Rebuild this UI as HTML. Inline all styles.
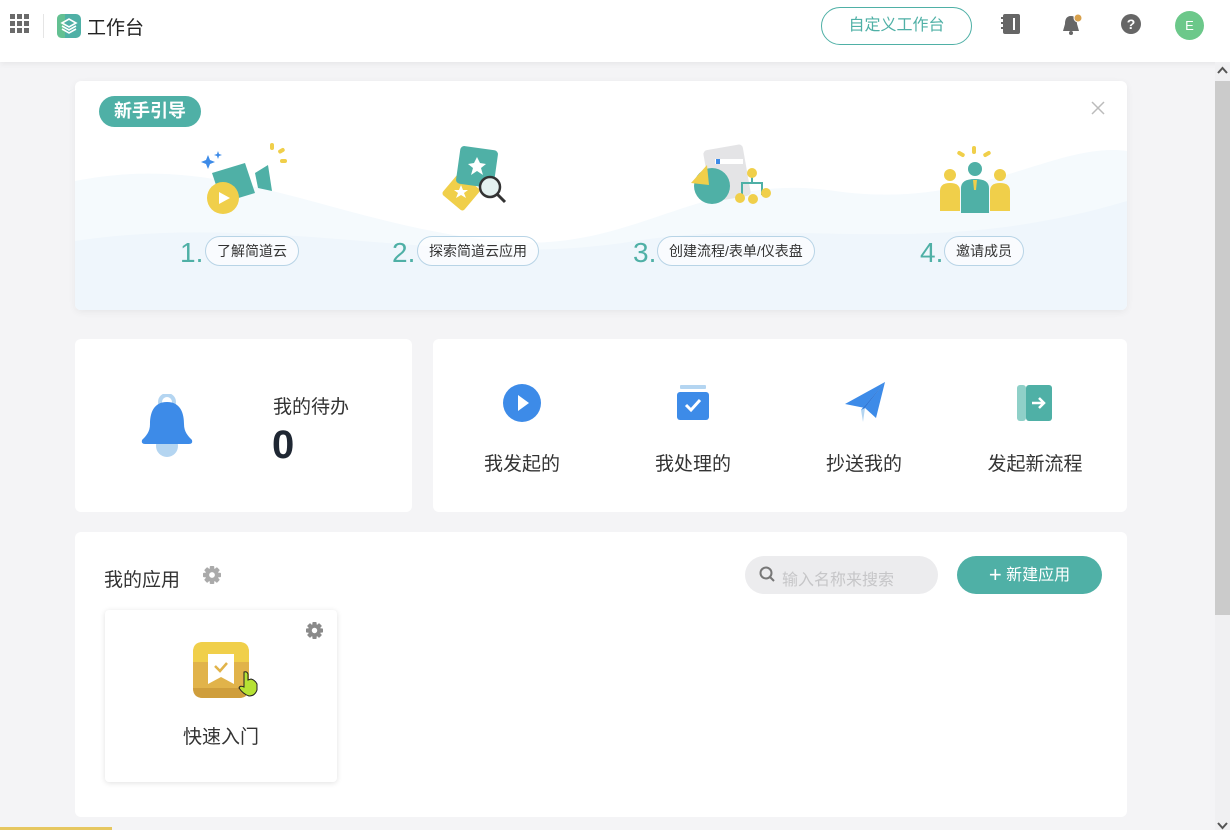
<!DOCTYPE html>
<html><head><meta charset="utf-8"><style>
*{margin:0;padding:0;box-sizing:border-box}
body{width:1230px;height:830px;overflow:hidden;background:#f4f4f6;font-family:"Liberation Sans","Noto Sans CJK SC",sans-serif;color:#333;position:relative}
.top{position:absolute;left:0;top:0;width:1230px;height:62px;background:#fff;box-shadow:0 2px 6px rgba(0,0,0,.06)}
.card{position:absolute;background:#fff;border-radius:6px}
.abs{position:absolute}
.pill{position:absolute;border:1px solid #b8d4e6;border-radius:15px;height:30px;line-height:28px;font-size:14px;color:#333;padding:0 11px;background:rgba(255,255,255,.6)}
.num{position:absolute;font-size:28px;color:#4fb0a6;line-height:30px}
.lbl{position:absolute;font-size:19px;color:#333;text-align:center;width:140px}
</style></head><body>
<svg width="0" height="0" style="position:absolute"><defs>
<g id="gear"><g fill="currentColor"><rect x="7.5" y="0" width="5" height="20" rx="1"/><rect x="7.5" y="0" width="5" height="20" rx="1" transform="rotate(45 10 10)"/><rect x="7.5" y="0" width="5" height="20" rx="1" transform="rotate(90 10 10)"/><rect x="7.5" y="0" width="5" height="20" rx="1" transform="rotate(135 10 10)"/><circle cx="10" cy="10" r="7.5"/></g><circle cx="10" cy="10" r="3.2" fill="#fff"/></g>
</defs></svg>
<div class="top">
  <svg class="abs" style="left:10px;top:14px" width="20" height="20"><g fill="#6b6b6b"><rect x="0" y="0" width="5" height="5"/><rect x="7" y="0" width="5" height="5"/><rect x="14" y="0" width="5" height="5"/><rect x="0" y="7" width="5" height="5"/><rect x="7" y="7" width="5" height="5"/><rect x="14" y="7" width="5" height="5"/><rect x="0" y="14" width="5" height="5"/><rect x="7" y="14" width="5" height="5"/><rect x="14" y="14" width="5" height="5"/></g></svg>
  <div class="abs" style="left:43px;top:14px;width:1px;height:24px;background:#e5e5e5"></div>
  <svg class="abs" style="left:57px;top:14px" width="24" height="24"><rect width="24" height="24" rx="5" fill="#4fb0a6"/><path d="M0 5 Q0 0 5 0 L8 0 L8 24 L5 24 Q0 24 0 19Z" fill="#6cc88a" opacity=".7"/><path d="M5 9 L12 5 L19 9 L12 13Z M5 12 L12 16 L19 12 M5 15 L12 19 L19 15" fill="none" stroke="#fff" stroke-width="1.6"/></svg>
  <div class="abs" style="left:87px;top:13px;font-size:19px;color:#222">工作台</div>
  <div class="abs" style="left:821px;top:7px;width:151px;height:38px;border:1px solid #4fb0a6;border-radius:19px;text-align:center;line-height:36px;font-size:16px;color:#4fb0a6">自定义工作台</div>
  <svg class="abs" style="left:1000px;top:13px" width="22" height="22"><rect x="3" y="1" width="17" height="20" rx="2" fill="#666"/><rect x="13" y="5" width="2" height="12" fill="#fff"/><g fill="#666"><rect x="1" y="4" width="3" height="2"/><rect x="1" y="9" width="3" height="2"/><rect x="1" y="14" width="3" height="2"/></g></svg>
  <svg class="abs" style="left:1060px;top:12px" width="24" height="24"><path d="M11 4 C6 4 5 8 5 12 L3 19 L19 19 L17 12 C17 8 16 4 11 4Z" fill="#666"/><circle cx="11" cy="21" r="2" fill="#666"/><circle cx="18" cy="6" r="4" fill="#d8a14c" stroke="#fff" stroke-width="1"/></svg>
  <svg class="abs" style="left:1120px;top:13px" width="22" height="22"><circle cx="11" cy="11" r="10" fill="#666"/><text x="11" y="16" text-anchor="middle" font-size="14" font-weight="bold" fill="#fff" font-family="Liberation Sans">?</text></svg>
  <div class="abs" style="left:1175px;top:11px;width:29px;height:29px;border-radius:50%;background:#6cc88a;color:#fff;text-align:center;line-height:29px;font-size:13px">E</div>
</div>
<div class="abs" style="left:1215px;top:62px;width:15px;height:768px;background:#f0f0f2"></div>
<div class="abs" style="left:1215px;top:81px;width:15px;height:534px;background:#cbcbcb"></div>
<svg class="abs" style="left:1217px;top:66px" width="11" height="8"><path d="M1 7 L5.5 2 L10 7" stroke="#555" stroke-width="2" fill="none"/></svg>
<svg class="abs" style="left:1217px;top:822px" width="11" height="8"><path d="M1 1 L5.5 6 L10 1" stroke="#555" stroke-width="2" fill="none"/></svg>

<div class="card" style="left:75px;top:81px;width:1052px;height:229px;overflow:hidden;box-shadow:0 2px 8px rgba(0,0,0,.06)">
  <svg class="abs" style="left:0;top:0" width="1052" height="229"><path d="M0 100 C150 70 250 140 420 160 C560 175 620 90 760 110 C900 130 980 60 1052 70 L1052 229 L0 229Z" fill="#f5fafd"/><path d="M0 160 C200 130 380 190 560 160 C720 135 850 180 1052 120 L1052 229 L0 229Z" fill="#eff6fc"/></svg>
  <div class="abs" style="left:24px;top:15px;width:102px;height:31px;border-radius:16px;background:#4fb0a6;color:#fff;font-weight:bold;font-size:18px;text-align:center;line-height:31px">新手引导</div>
  <svg class="abs" style="left:1016px;top:20px" width="14" height="14"><path d="M1 1 L13 13 M13 1 L1 13" stroke="#bbb" stroke-width="1.5"/></svg>
  <svg class="abs" style="left:125px;top:62px" width="90" height="75"><path d="M8 12 l2 5 5 2 -5 2 -2 5 -2 -5 -5 -2 5 -2z M18 8 l1 3 3 1 -3 1 -1 3 -1 -3 -3 -1 3 -1z" fill="#3d8be8"/><path d="M12 30 L45 20 L55 50 L22 60Z" fill="#4fb0a6"/><path d="M55 30 L68 22 L72 48 L58 45Z" fill="#4fb0a6"/><circle cx="23" cy="55" r="16" fill="#f0cf4a"/><path d="M19 49 L30 55 L19 61Z" fill="#fff"/><g fill="#f0cf4a"><rect x="70" y="0" width="4" height="7" rx="2"/><rect x="78" y="6" width="7" height="4" rx="2" transform="rotate(-30 81 8)"/><rect x="80" y="16" width="7" height="4" rx="2"/></g></svg>
  <div class="num" style="left:105px;top:157px">1.</div><div class="pill" style="left:130px;top:155px">了解简道云</div>
  <svg class="abs" style="left:355px;top:62px" width="80" height="75"><rect x="17" y="35" width="28" height="28" rx="3" fill="#f0cf4a" transform="rotate(40 31 49)"/><path d="M31 42 l2 5 5 0 -4 3 2 5 -5 -3 -5 3 2 -5 -4 -3 5 0z" fill="#fff"/><rect x="28" y="5" width="38" height="38" rx="4" fill="#4fb0a6" transform="rotate(8 47 24)"/><path d="M47 14 l3 6 6 1 -5 4 2 7 -6 -4 -6 4 2 -7 -5 -4 6 -1z" fill="#fff"/><circle cx="60" cy="44" r="10" fill="#e4f1f0" stroke="#333" stroke-width="2.5"/><line x1="67" y1="51" x2="75" y2="59" stroke="#333" stroke-width="3"/></svg>
  <div class="num" style="left:317px;top:157px">2.</div><div class="pill" style="left:342px;top:155px">探索简道云应用</div>
  <svg class="abs" style="left:610px;top:62px" width="95" height="75"><rect x="22" y="4" width="40" height="52" rx="4" fill="#e4e4e6" transform="rotate(-10 42 30)"/><rect x="30" y="16" width="28" height="5" fill="#fff"/><rect x="31" y="16" width="4" height="5" fill="#3d8be8"/><circle cx="27" cy="43" r="18" fill="#4fb0a6"/><path d="M6 40 L22 22 L24 42Z" fill="#f0cf4a"/><path d="M57 52 L57 40 L77 40 L77 52 M67 32 L67 40" stroke="#4fb0a6" stroke-width="2" fill="none"/><g fill="#f0cf4a"><circle cx="67" cy="30" r="5"/><circle cx="55" cy="55" r="5"/><circle cx="68" cy="56" r="5"/><circle cx="81" cy="50" r="5"/></g></svg>
  <div class="num" style="left:558px;top:157px">3.</div><div class="pill" style="left:582px;top:155px">创建流程/表单/仪表盘</div>
  <svg class="abs" style="left:860px;top:62px" width="80" height="75"><g fill="#f0cf4a"><rect x="37" y="3" width="4" height="8" rx="2"/><rect x="22" y="9" width="8" height="4" rx="2" transform="rotate(30 26 11)"/><rect x="48" y="9" width="8" height="4" rx="2" transform="rotate(-30 52 11)"/><circle cx="15" cy="32" r="6"/><path d="M5 48 Q5 40 15 40 Q25 40 25 48 L25 68 L5 68Z"/><circle cx="65" cy="32" r="6"/><path d="M55 48 Q55 40 65 40 Q75 40 75 48 L75 68 L55 68Z"/></g><circle cx="40" cy="26" r="7" fill="#4fb0a6"/><path d="M26 45 Q26 36 40 36 Q54 36 54 45 L54 70 L26 70Z" fill="#4fb0a6"/><path d="M38 37 L42 37 L41 47 L39 47Z" fill="#f0cf4a"/></svg>
  <div class="num" style="left:845px;top:157px">4.</div><div class="pill" style="left:869px;top:155px">邀请成员</div>
</div>

<div class="card" style="left:75px;top:339px;width:337px;height:173px">
  <svg class="abs" style="left:62px;top:55px" width="60" height="65"><circle cx="30" cy="8" r="7" fill="none" stroke="#b4d5f1" stroke-width="4"/><circle cx="30" cy="52" r="11" fill="#b4d5f1"/><path d="M30 8 C16 8 13 20 13 30 C13 38 9 42 5 46 Q4 50 8 50 L52 50 Q56 50 55 46 C51 42 47 38 47 30 C47 20 44 8 30 8Z" fill="#3d8be8"/></svg>
  <div class="abs" style="left:198px;top:53px;font-size:19px;color:#333">我的待办</div>
  <div class="abs" style="left:197px;top:84px;font-size:40px;font-weight:bold;color:#1f2733">0</div>
</div>
<div class="card" style="left:433px;top:339px;width:694px;height:173px">
  <svg class="abs" style="left:70px;top:45px" width="40" height="40"><ellipse cx="19" cy="19" rx="19" ry="19" fill="#3d8be8"/><path d="M15 11 L26 19 L15 27Z" fill="#fff"/></svg>
  <div class="lbl" style="left:19px;top:110px">我发起的</div>
  <svg class="abs" style="left:242px;top:45px" width="40" height="40"><rect x="5" y="1" width="26" height="4" rx="1" fill="#b4d5f1"/><rect x="2" y="8" width="32" height="28" rx="3" fill="#3d8be8"/><path d="M11 21 L16 26 L25 16" stroke="#fff" stroke-width="3" fill="none"/></svg>
  <div class="lbl" style="left:190px;top:110px">我处理的</div>
  <svg class="abs" style="left:410px;top:43px" width="45" height="42"><path d="M2 22 L42 0 L33 36 L22 26Z" fill="#3d8be8"/><path d="M22 26 L42 0 L18 28 L20 40Z" fill="#b4d5f1"/><path d="M22 26 L42 0 L18 28Z" fill="#2f78d8"/></svg>
  <div class="lbl" style="left:361px;top:110px">抄送我的</div>
  <svg class="abs" style="left:583px;top:45px" width="40" height="40"><rect x="1" y="1" width="9" height="36" rx="3" fill="#8fd0c8"/><rect x="10" y="1" width="26" height="36" rx="3" fill="#4fb0a6"/><path d="M16 19 L28 19 M23 14 L28 19 L23 24" stroke="#fff" stroke-width="2.5" fill="none"/></svg>
  <div class="lbl" style="left:532px;top:110px">发起新流程</div>
</div>

<div class="card" style="left:75px;top:532px;width:1052px;height:285px">
  <div class="abs" style="left:29px;top:33px;font-size:19px;color:#333">我的应用</div>
  <svg class="abs" style="left:128px;top:34px;color:#aaa" width="18" height="18" viewBox="0 0 20 20"><use href="#gear"/></svg>
  <div class="abs" style="left:670px;top:24px;width:193px;height:38px;border-radius:19px;background:#ececee"></div>
  <svg class="abs" style="left:684px;top:34px" width="18" height="18"><circle cx="7" cy="7" r="5.5" fill="none" stroke="#777" stroke-width="2"/><line x1="11" y1="11" x2="15" y2="15" stroke="#777" stroke-width="2"/></svg>
  <div class="abs" style="left:707px;top:34px;font-size:16px;color:#c6c6c8">输入名称来搜索</div>
  <div class="abs" style="left:882px;top:24px;width:145px;height:38px;border-radius:19px;background:#4fb0a6;color:#fff;font-size:16px;line-height:38px;text-align:center"><span style="font-size:22px;vertical-align:-2px">+</span> 新建应用</div>
  <div class="abs" style="left:30px;top:78px;width:232px;height:172px;border-radius:4px;background:#fff;box-shadow:0 1px 6px rgba(0,0,0,.12)">
    <svg class="abs" style="left:201px;top:12px;color:#8a8a8a" width="17" height="17" viewBox="0 0 20 20"><use href="#gear"/></svg>
    <svg class="abs" style="left:88px;top:32px" width="70" height="60"><rect x="0" y="0" width="56" height="56" rx="10" fill="#e1b34a"/><path d="M0 10 Q0 0 10 0 L46 0 Q56 0 56 10 L56 20 L0 20Z" fill="#f0cf4a"/><path d="M0 46 L56 46 Q56 56 46 56 L10 56 Q0 56 0 46Z" fill="#cf9e3c"/><path d="M15 12 L41 12 L41 42 L28 35 L15 42Z" fill="#fff"/><path d="M22 24 L27 29 L34 21" stroke="#e1b34a" stroke-width="2.5" fill="none"/><path d="M51 40 L51 30 Q54 29 55 32 L55 38 L58 37 Q62 38 64 42 L64 48 Q62 54 56 54 Q50 52 46 46 Q47 43 51 45Z" fill="#b6e234" stroke="#222" stroke-width="1"/></svg>
    <div class="abs" style="left:0;top:112px;width:232px;text-align:center;font-size:19px;color:#333">快速入门</div>
  </div>
</div>
<div class="abs" style="left:0;top:827px;width:112px;height:3px;background:#e6c760"></div>
</body></html>
